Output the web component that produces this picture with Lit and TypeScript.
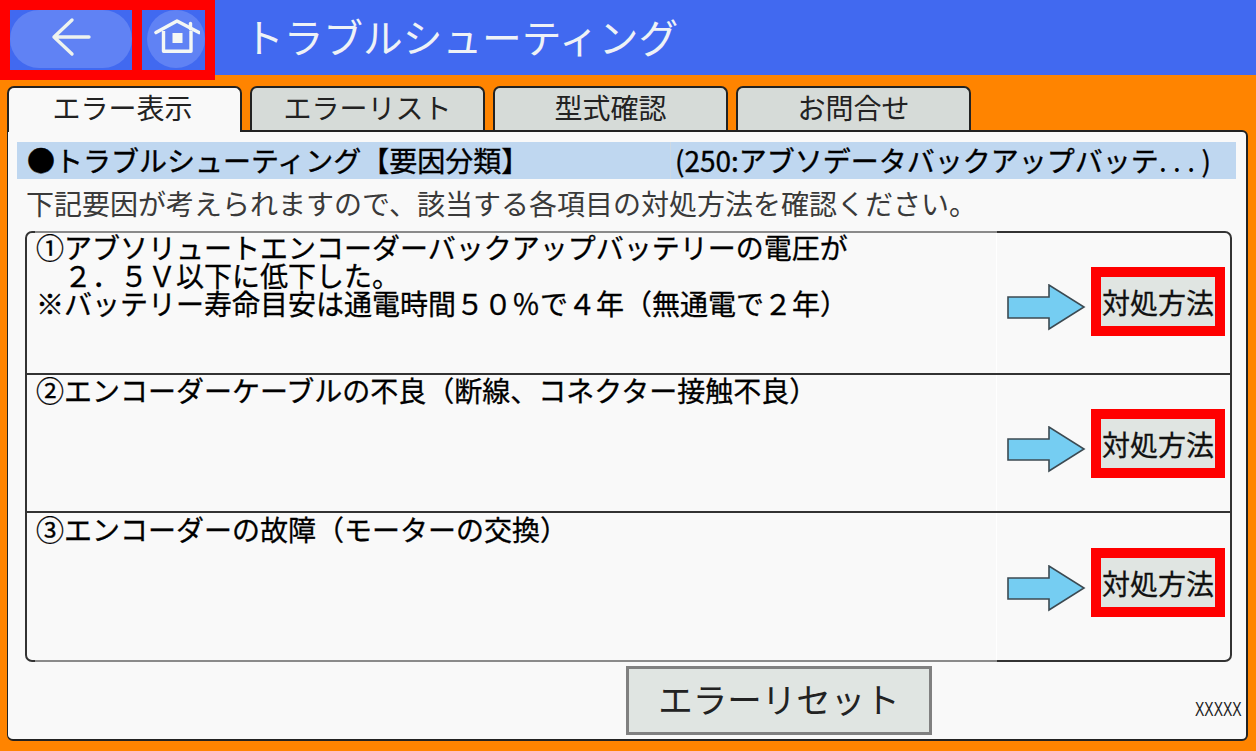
import { LitElement, html, css } from "lit";
import { customElement } from "lit/decorators.js";

const arrow = html`<svg class="arrow" width="80" height="47" viewBox="0 0 80 47">
  <path d="M1 13H42V1L77 23L42 45V34H1Z" fill="#75cdf2" stroke="#3c4a52" stroke-width="1.6" />
</svg>`;

@customElement("app-root")
export class AppRoot extends LitElement {
  static styles = css`
    :host {
      display: block;
      width: 1256px;
      height: 751px;
      background: #ff8400;
      font-family: "Noto Sans CJK JP", "Liberation Sans", sans-serif;
      color: #141414;
      overflow: hidden;
    }
    .header {
      height: 75px;
      background: #4169f0;
      display: flex;
      align-items: flex-start;
    }
    .nav {
      height: 80px;
      box-sizing: border-box;
      border: 10px solid #ff0000;
      background: #ff0000;
      display: flex;
      gap: 10px;
    }
    .nav-cell {
      height: 60px;
      background: #4169f0;
      display: flex;
      align-items: flex-start;
      justify-content: center;
    }
    .back { width: 122px; }
    .home { width: 63px; justify-content: flex-end; }
    .pill {
      width: 122px;
      height: 58px;
      border-radius: 29px;
      background: #6082f4;
      display: flex;
      align-items: center;
      justify-content: center;
    }
    .pill svg { margin-bottom: 4px; }
    .round {
      width: 58px;
      height: 58px;
      border-radius: 50%;
      background: #6082f4;
      display: flex;
      align-items: center;
      justify-content: center;
    }
    .round svg { margin-bottom: 4px; }
    .title {
      margin-left: 29px;
      font-size: 39.7px;
      line-height: 71px;
      color: #eef2f6;
      white-space: nowrap;
    }
    .tabs {
      display: flex;
      margin: 11px 0 0 7px;
      height: 45px;
      gap: 8px;
      position: relative;
      z-index: 1;
    }
    .tab {
      box-sizing: border-box;
      width: 235px;
      height: 44px;
      border: 2px solid #222;
      border-bottom: none;
      border-radius: 7px 7px 0 0;
      background: #d6dbd8;
      font-size: 28px;
      line-height: 39px;
      text-align: center;
      white-space: nowrap;
      color: #222;
    }
    .tab.active {
      background: #f9f9f9;
      height: 46px;
      line-height: 38px;
      padding-right: 4px;
    }
    .panel {
      box-sizing: border-box;
      margin-left: 7px;
      margin-top: -1px;
      width: 1241px;
      height: 611px;
      background: #f9f9f9;
      border: 2px solid #222;
      border-left-width: 1px;
      border-radius: 0 6px 6px 6px;
      padding: 10px 10px 0 9px;
      display: flex;
      flex-direction: column;
      position: relative;
    }
    .section {
      height: 37px;
      flex: none;
      display: flex;
      background: #bfd7f0;
      font-size: 28px;
      line-height: 37px;
      color: #000;
      -webkit-text-stroke: 0.35px #000;
      white-space: nowrap;
    }
    .section-title { width: 653px; padding-left: 10px; box-sizing: border-box; }
    .section-code {
      border-left: 1px solid #cdd9e4;
      padding-left: 4px;
      flex: 1;
    }
    .dots { letter-spacing: 6.4px; -webkit-text-stroke: 0; }
    .instruction {
      margin: 4px 0 0 9px;
      height: 48px;
      font-size: 28px;
      line-height: 40px;
      color: #3a3a3a;
      white-space: nowrap;
    }
    .list {
      box-sizing: border-box;
      width: 1207px;
      margin-left: 8px;
      height: 431px;
      flex: none;
      border: 2px solid #333;
      border-radius: 7px;
      display: flex;
      flex-direction: column;
      position: relative;
    }
    .list::before,
    .list::after {
      content: "";
      position: absolute;
      left: 8px;
      width: 962px;
      height: 2px;
      background: #8a8a8a;
    }
    .list::before { top: -2px; }
    .list::after { bottom: -2px; }
    .row {
      display: flex;
      box-sizing: border-box;
      border-top: 2px solid #333;
    }
    .row:nth-child(1) { border-top: none; height: 140px; }
    .row:nth-child(2) { height: 138px; }
    .row:nth-child(3) { height: 149px; }
    .text {
      width: 970px;
      box-sizing: border-box;
      padding: 0 0 0 9px;
      font-size: 28px;
      line-height: 28px;
      color: #000;
      -webkit-text-stroke: 0.3px #000;
      white-space: nowrap;
      border-right: 1px solid #fff;
    }
    .row:nth-child(2) .text { padding-top: 1px; }
    .row:nth-child(3) .text { padding-top: 2px; }
    .action {
      flex: 1;
      display: flex;
      align-items: flex-start;
      padding: 34px 0 0 10px;
    }
    .row:nth-child(3) .action { padding-top: 35px; }
    .arrow { margin: 17px 0 0 0; flex: none; }
    .fix {
      box-sizing: border-box;
      width: 134px;
      height: 69px;
      border: 10px solid #ff0000;
      background: #e0e5e2;
      font-size: 28px;
      line-height: 48px;
      text-align: center;
      white-space: nowrap;
      margin-left: 4px;
      color: #111;
      -webkit-text-stroke: 0.3px #111;
      font-family: inherit;
      padding: 0;
    }
    .foot {
      display: flex;
      flex: 1;
    }
    .reset {
      box-sizing: border-box;
      flex: none;
      margin: 4px 0 0 609px;
      width: 306px;
      height: 69px;
      border: 3px solid #808080;
      background: #e0e5e2;
      font-size: 34.5px;
      line-height: 54px;
      color: #222;
      font-family: inherit;
      padding: 0 0 5px;
      white-space: nowrap;
    }
    .code {
      flex: none;
      margin: 35px 0 0 263px;
      width: 47px;
      font-family: "Liberation Sans", sans-serif;
      font-size: 20px;
      line-height: 24px;
      color: #222;
      white-space: nowrap;
      transform: scaleX(0.7);
      transform-origin: left;
    }
  `;

  render() {
    const tabs = ["エラー表示", "エラーリスト", "型式確認", "お問合せ"];
    const rows = [
      [
        "①アブソリュートエンコーダーバックアップバッテリーの電圧が",
        "　２．５Ｖ以下に低下した。",
        "※バッテリー寿命目安は通電時間５０％で４年（無通電で２年）",
      ],
      ["②エンコーダーケーブルの不良（断線、コネクター接触不良）"],
      ["③エンコーダーの故障（モーターの交換）"],
    ];
    return html`
      <div class="header">
        <div class="nav">
          <div class="nav-cell back">
            <div class="pill">
              <svg width="40" height="40" viewBox="0 0 40 40" fill="none" stroke="#eef3ee" stroke-width="3.4" stroke-linecap="round" stroke-linejoin="round">
                <path d="M38 20H3M21 3L3 20L21 37" />
              </svg>
            </div>
          </div>
          <div class="nav-cell home">
            <div class="round">
              <svg width="48" height="38" viewBox="0 0 48 38" fill="none">
                <path d="M4 14.5L25 3L47 14.5" stroke="#f4f7f4" stroke-width="3.6" stroke-linejoin="round" stroke-linecap="round" />
                <path d="M38.5 5.5V11" stroke="#f4f7f4" stroke-width="3.4" stroke-linecap="round" />
                <path d="M11.5 13V33.2H39V13" stroke="#f4f7f4" stroke-width="3.4" stroke-linejoin="round" />
                <rect x="20.5" y="15" width="10" height="10" fill="#f4f7f4" />
              </svg>
            </div>
          </div>
        </div>
        <div class="title">トラブルシューティング</div>
      </div>
      <div class="tabs">
        ${tabs.map((t, i) => html`<div class="tab ${i === 0 ? "active" : ""}">${t}</div>`)}
      </div>
      <div class="panel">
        <div class="section">
          <div class="section-title">●トラブルシューティング【要因分類】</div>
          <div class="section-code">(250:アブソデータバックアップバッテ<span class="dots">...</span>)</div>
        </div>
        <div class="instruction">下記要因が考えられますので、該当する各項目の対処方法を確認ください。</div>
        <div class="list">
          ${rows.map(
            (lines) => html`<div class="row">
              <div class="text">${lines.map((l) => html`<div>${l}</div>`)}</div>
              <div class="action">
                ${arrow}
                <button class="fix">対処方法</button>
              </div>
            </div>`,
          )}
        </div>
        <div class="foot">
          <button class="reset">エラーリセット</button>
          <div class="code">XXXXX</div>
        </div>
      </div>
    `;
  }
}
